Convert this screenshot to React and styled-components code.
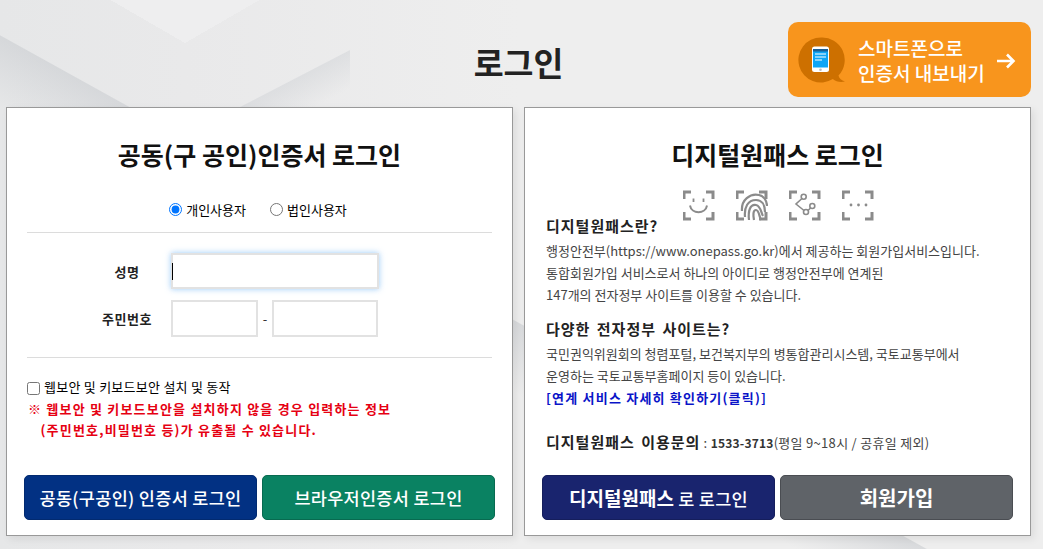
import React from "react";
import styled, { createGlobalStyle } from "styled-components";

const KR = `"Noto Sans CJK KR", "Liberation Sans", sans-serif`;

const Global = createGlobalStyle`
  html, body { margin: 0; padding: 0; }
  body {
    width: 1043px;
    height: 549px;
    overflow: hidden;
    font-family: ${KR};
    color: #000;
    background-color: #eeeeee;
    background-image:
      conic-gradient(from -60deg at 50% 100%, #eeeeef 0 120deg, transparent 0),
      linear-gradient(209deg, transparent 0 536px, rgba(200, 203, 207, 0.55) 537px, rgba(238, 238, 238, 0) 600px),
      linear-gradient(152.6deg, transparent 0 205px, rgba(205, 208, 212, 0.45) 206px, rgba(238, 238, 238, 0) 240px),
      linear-gradient(90deg, #e6e7e8 0, #e9e9ea 185px, #eeeeee 520px);
    background-size: 150px 43px, 100% 100%, 350px 107px, 100% 100%;
    background-position: 110px 0, 0 0, 0 0, 0 0;
    background-repeat: no-repeat;
  }
`;

const Page = styled.div`
  width: 1043px;
  height: 549px;
  display: flex;
  flex-direction: column;
`;

const Header = styled.header`
  height: 107px;
  padding: 22px 12px 0 6px;
  box-sizing: border-box;
  display: grid;
  grid-template-columns: 243px 1fr 243px;
  grid-template-rows: 75px;
`;

const Title = styled.h1`
  grid-column: 2;
  margin: 0;
  padding-top: 15px;
  font-size: 32.5px;
  line-height: 50px;
  font-weight: 700;
  color: #222;
  text-align: center;
`;

const SmartButton = styled.a`
  grid-column: 3;
  display: flex;
  align-items: center;
  background: #f8951d;
  border-radius: 10px;
  padding-left: 8px;
  color: #fff;
`;

const SmartText = styled.div`
  margin-left: 12px;
  font-size: 19px;
  line-height: 25px;
  font-weight: 500;
  white-space: nowrap;
`;

const Arrow = styled.svg`
  margin: 2px 0 0 11px;
  flex: none;
`;

const Panels = styled.main`
  display: flex;
  gap: 11px;
  padding-left: 6px;
`;

const Panel = styled.section`
  width: 507px;
  height: 429px;
  box-sizing: border-box;
  background: #fff;
  border: 1px solid #999;
  box-shadow: 3px 3px 8px rgba(0, 0, 0, 0.08);
  display: flex;
  flex-direction: column;
  padding: 0 17px 15px;
`;

const PanelTitle = styled.h2`
  margin: 28px 0 0;
  font-size: 25px;
  line-height: 36px;
  font-weight: 700;
  color: #111;
  text-align: center;
`;

const RadioRow = styled.div`
  margin-top: 26px;
  height: 22px;
  display: flex;
  justify-content: center;
  align-items: center;
  gap: 24px;
  font-size: 13px;
  padding-right: 3px;
`;

const RadioLabel = styled.label`
  display: flex;
  align-items: center;
  gap: 4px;
`;

const Radio = styled.input`
  margin: 0;
  width: 13px;
  height: 13px;
`;

const Rule = styled.hr`
  margin: ${(p) => p.$top}px 3px 0;
  border: 0;
  border-top: 1px solid #dcdcdc;
`;

const FormRow = styled.div`
  display: grid;
  grid-template-columns: 147px auto;
  align-items: center;
  margin-top: ${(p) => p.$top}px;
`;

const FieldLabel = styled.label`
  padding-left: 59px;
  font-size: 13px;
  font-weight: 700;
  letter-spacing: 0.5px;
  text-align: center;
  color: #222;
`;

const Fields = styled.div`
  display: flex;
  align-items: center;
`;

const InputWrap = styled.div`
  position: relative;
  line-height: 0;
`;

const TextInput = styled.input`
  box-sizing: border-box;
  width: ${(p) => p.$w}px;
  height: ${(p) => p.$h}px;
  padding: 0 0 0 1px;
  margin: 0;
  border: 2px solid #e2e2e2;
  background: #fff;
  outline: none;
  &.focus {
    box-shadow: 0 0 6px rgba(120, 185, 245, 0.75);
  }
`;

const Caret = styled.span`
  position: absolute;
  left: 1px;
  top: 10px;
  width: 1px;
  height: 17px;
  background: #000;
`;

const Dash = styled.span`
  width: 14px;
  text-align: center;
  font-size: 13px;
  color: #333;
`;

const CheckRow = styled.label`
  margin: 20px 0 0 3px;
  display: flex;
  align-items: center;
  gap: 4px;
  font-size: 13px;
  line-height: 18px;
  letter-spacing: 0.25px;
`;

const Check = styled.input`
  margin: 2px 0 0;
  width: 13px;
  height: 13px;
`;

const Warning = styled.p`
  margin: 2px 0 0 4px;
  color: #e60012;
  font-size: 13px;
  line-height: 21px;
  font-weight: 700;
  letter-spacing: 1.2px;
  white-space: pre;
`;

const ButtonRow = styled.div`
  margin-top: auto;
  display: grid;
  grid-template-columns: 233px 233px;
  gap: 5px;
`;

const Button = styled.button`
  height: 45px;
  border-radius: 5px;
  border: 1px solid ${(p) => p.$line};
  background: ${(p) => p.$bg};
  color: #fff;
  font-family: ${KR};
  font-size: 17.5px;
  font-weight: 500;
  letter-spacing: 0.3px;
  padding: 0;
`;

const Strong = styled.b`
  font-size: ${(p) => p.$size}px;
  font-weight: 700;
  letter-spacing: 0;
`;

const PassIcons = styled.div`
  display: flex;
  justify-content: center;
  gap: 21px;
  margin-top: 18px;
  padding-left: 1px;
  height: 25px;
  color: #8b8b8b;
`;

const InfoBody = styled.div`
  padding: 0 4px;
`;

const InfoHead = styled.h3`
  margin: ${(p) => p.$top || 0}px 0 0;
  font-size: 15px;
  line-height: 22px;
  font-weight: 700;
  color: #222;
  letter-spacing: 1px;
  word-spacing: 2px;
`;

const InfoText = styled.p`
  margin: 3px 0 0;
  font-size: 13px;
  line-height: 22px;
  color: #444;
  white-space: nowrap;
`;

const InfoLink = styled.a`
  display: block;
  font-size: 13px;
  line-height: 22px;
  font-weight: 700;
  color: #0a14c8;
  letter-spacing: 1.2px;
`;

const Contact = styled.div`
  margin-top: 21px;
  font-size: 13px;
  line-height: 24px;
  color: #444;
  letter-spacing: 0.3px;
  white-space: nowrap;
`;

const ContactHead = styled.b`
  font-size: 15px;
  color: #222;
  letter-spacing: 1px;
  word-spacing: 2px;
`;

const Phone = styled.b`
  font-size: 12px;
  color: #333;
  letter-spacing: 0.2px;
`;

const PassIcon = ({ children }) => (
  <svg width="32" height="31" viewBox="0 0 32 31">
    <path d="M1 9V2h7M23 2h7v7M1 22v7h7M23 29h7v-7" fill="none" stroke="currentColor" strokeWidth="3" />
    {children}
  </svg>
);

const Icons = () => (
  <PassIcons>
    <PassIcon>
      <path d="M10.500 8.500v3.500M20.500 8.500v3.500" stroke="currentColor" strokeWidth="1.800" />
      <path d="M7 15.500c1.500 9 15.500 9 17 0" fill="none" stroke="currentColor" strokeWidth="2" />
    </PassIcon>
    <PassIcon>
      <g fill="none" stroke="currentColor" strokeWidth="2.200">
        <path d="M6 21C5 10 14 3 23 5c5 1 8 6 8 11" />
        <path d="M9 27c-1-10 3-17 11-17 6 0 9 5 9 12" />
        <path d="M13 30c-1-9 1-16 7-15 5 1 5 8 7 11" />
        <path d="M18 30c-1-5-1-10 2-10s3 6 5 10" />
      </g>
    </PassIcon>
    <PassIcon>
      <g fill="none" stroke="currentColor" strokeWidth="1.600">
        <circle cx="14.700" cy="6.700" r="2.500" />
        <circle cx="23.300" cy="16" r="2.500" />
        <circle cx="17" cy="22" r="2.500" />
        <path d="M13 8.500 7 14l8 6.500M19 20.500l2.500-2.500" />
      </g>
    </PassIcon>
    <PassIcon>
      <g fill="currentColor">
        <circle cx="9" cy="15" r="1.400" />
        <circle cx="16.500" cy="15" r="1.400" />
        <circle cx="24" cy="15" r="1.400" />
      </g>
    </PassIcon>
  </PassIcons>
);

const PhoneBubble = () => (
  <svg width="50" height="48" viewBox="0 0 50 48">
    <path d="M25 1.500a22.500 22.500 0 1 0 11.800 41.600c3 2.700 8 3.400 12.200 2.400-3.500-.8-6-3.200-6.500-6A22.500 22.500 0 0 0 25 1.500z" fill="#cd7000" />
    <rect x="16" y="10.500" width="17" height="25.500" rx="2.500" fill="#fff" />
    <rect x="17" y="13" width="15" height="18.500" fill="#0ea5f5" />
    <rect x="17" y="13" width="15" height="2.500" fill="#1a5f94" />
    <path d="M19 18h11M19 21h11M19 24h7" stroke="#fff" strokeWidth="1" />
    <circle cx="24.500" cy="33.800" r="1.300" fill="#bbb" />
  </svg>
);

export default function App() {
  return (
    <Page>
      <Global />
      <Header>
        <Title>로그인</Title>
        <SmartButton>
          <PhoneBubble />
          <SmartText>
            스마트폰으로
            <br />
            인증서 내보내기
          </SmartText>
          <Arrow width="20" height="18" viewBox="0 0 20 18">
            <path d="M1 9h16M11 2.500l6.500 6.500-6.500 6.500" fill="none" stroke="#fff" strokeWidth="2.600" />
          </Arrow>
        </SmartButton>
      </Header>
      <Panels>
        <Panel>
          <PanelTitle>공동(구 공인)인증서 로그인</PanelTitle>
          <RadioRow>
            <RadioLabel>
              <Radio type="radio" name="kind" defaultChecked />
              개인사용자
            </RadioLabel>
            <RadioLabel>
              <Radio type="radio" name="kind" />
              법인사용자
            </RadioLabel>
          </RadioRow>
          <Rule $top={12} />
          <FormRow $top={20}>
            <FieldLabel>성명</FieldLabel>
            <Fields>
              <InputWrap>
                <TextInput className="focus" $w={208} $h={36} />
                <Caret />
              </InputWrap>
            </Fields>
          </FormRow>
          <FormRow $top={11}>
            <FieldLabel>주민번호</FieldLabel>
            <Fields>
              <TextInput $w={87} $h={37} />
              <Dash>-</Dash>
              <TextInput $w={106} $h={37} />
            </Fields>
          </FormRow>
          <Rule $top={20} />
          <CheckRow>
            <Check type="checkbox" />
            웹보안 및 키보드보안 설치 및 동작
          </CheckRow>
          <Warning>{"※ 웹보안 및 키보드보안을 설치하지 않을 경우 입력하는 정보\n   (주민번호,비밀번호 등)가 유출될 수 있습니다."}</Warning>
          <ButtonRow>
            <Button $bg="#023183" $line="#022a70">공동(구공인) 인증서 로그인</Button>
            <Button $bg="#0a8262" $line="#086a50">브라우저인증서 로그인</Button>
          </ButtonRow>
        </Panel>
        <Panel>
          <PanelTitle>디지털원패스 로그인</PanelTitle>
          <Icons />
          <InfoBody>
            <InfoHead>디지털원패스란?</InfoHead>
            <InfoText>
              행정안전부(https://www.onepass.go.kr)에서 제공하는 회원가입서비스입니다.
              <br />
              통합회원가입 서비스로서 하나의 아이디로 행정안전부에 연계된
              <br />
              147개의 전자정부 사이트를 이용할 수 있습니다.
            </InfoText>
            <InfoHead $top={12}>다양한 전자정부 사이트는?</InfoHead>
            <InfoText>
              국민권익위원회의 청렴포털, 보건복지부의 병통합관리시스템, 국토교통부에서
              <br />
              운영하는 국토교통부홈페이지 등이 있습니다.
            </InfoText>
            <InfoLink>[연계 서비스 자세히 확인하기(클릭)]</InfoLink>
            <Contact>
              <ContactHead>디지털원패스 이용문의</ContactHead> : <Phone>1533-3713</Phone>(평일 9~18시 / 공휴일 제외)
            </Contact>
          </InfoBody>
          <ButtonRow>
            <Button $bg="#19246e" $line="#151e5c">
              <Strong $size={19}>디지털원패스</Strong> 로 로그인
            </Button>
            <Button $bg="#5f6368" $line="#4a4d52">
              <Strong $size={20}>회원가입</Strong>
            </Button>
          </ButtonRow>
        </Panel>
      </Panels>
    </Page>
  );
}
